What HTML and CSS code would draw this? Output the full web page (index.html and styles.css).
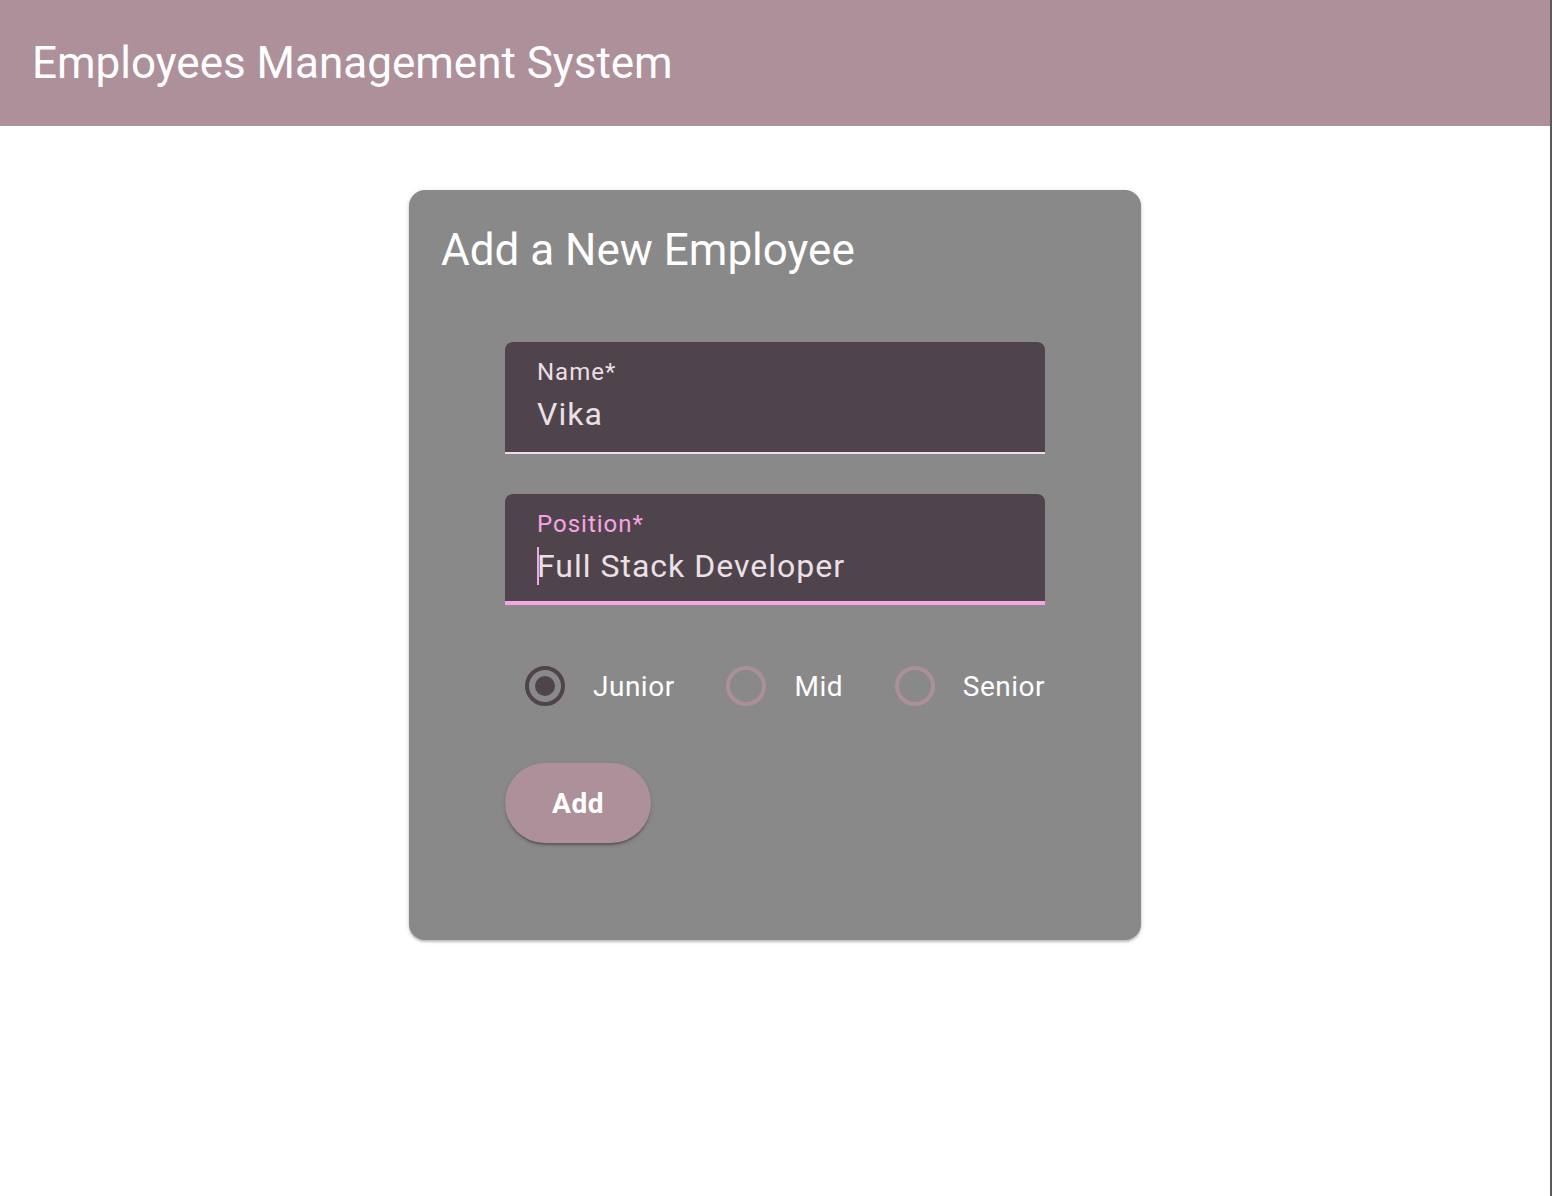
FILE: index.html
```html
<!DOCTYPE html>
<html lang="en">
<head>
<meta charset="utf-8">
<title>Employees Management System</title>
<link rel="stylesheet" href="styles.css">
</head>
<body>
<header class="toolbar">
  <span class="toolbar-title">Employees Management System</span>
</header>
<main class="content">
  <section class="card">
    <h2 class="card-title">Add a New Employee</h2>
    <form class="form">
      <div class="field">
        <label class="field-label">Name*</label>
        <div class="field-value">Vika</div>
      </div>
      <div class="field field-focused">
        <label class="field-label">Position*</label>
        <div class="field-value"><span class="caret"></span>Full Stack Developer</div>
      </div>
      <div class="radio-group">
        <div class="radio">
          <span class="radio-touch"><span class="radio-circle radio-checked"><span class="radio-dot"></span></span></span>
          <span class="radio-label">Junior</span>
        </div>
        <div class="radio">
          <span class="radio-touch"><span class="radio-circle"></span></span>
          <span class="radio-label">Mid</span>
        </div>
        <div class="radio">
          <span class="radio-touch"><span class="radio-circle"></span></span>
          <span class="radio-label">Senior</span>
        </div>
      </div>
      <div class="actions">
        <button type="button" class="btn-add">Add</button>
      </div>
    </form>
  </section>
</main>
</body>
</html>
```

FILE: styles.css
```css
* { box-sizing: border-box; }
html, body { height: 100%; }
body {
  margin: 0;
  font-family: Roboto, "Liberation Sans", sans-serif;
  background: #ffffff;
  border-right: 2px solid #5b5b5b;
}
.toolbar {
  height: 126px;
  background: #ae909a;
  display: flex;
  align-items: center;
  padding: 0 32px;
}
.toolbar-title {
  color: #ffffff;
  font-size: 44px;
  line-height: 56px;
  font-weight: 400;
  margin-top: -1px;
}
.content {
  display: flex;
  justify-content: center;
  padding-top: 64px;
}
.card {
  width: 732px;
  height: 750px;
  background: #898989;
  border-radius: 16px;
  padding: 32px;
  box-shadow: 0 2px 2px rgba(0,0,0,0.18), 0 1px 5px rgba(0,0,0,0.14);
}
.card-title {
  margin: 0;
  color: #ffffff;
  font-size: 44px;
  line-height: 56px;
  font-weight: 400;
}
.form {
  width: 540px;
  margin: 64px auto 0;
  display: flex;
  flex-direction: column;
}
.field {
  height: 112px;
  background: #4f444b;
  border-radius: 8px 8px 0 0;
  border-bottom: 2px solid #eadfe5;
  padding: 16px 32px 0;
  margin-bottom: 40px;
}
.field-focused {
  height: 111px;
  border-bottom: 4px solid #f6a4e6;
}
.field-label {
  display: block;
  font-size: 24px;
  line-height: 28px;
  letter-spacing: 1px;
  color: #eadfe5;
}
.field-focused .field-label { color: #f6a4e6; }
.field-value {
  margin-top: 8px;
  font-size: 32px;
  line-height: 40px;
  letter-spacing: 1px;
  color: #ebe0e6;
}
.caret {
  display: inline-block;
  width: 2px;
  height: 38px;
  background: #f6a4e6;
  vertical-align: -8px;
  margin-right: -2px;
}
.radio-group {
  display: flex;
  justify-content: space-between;
  align-items: center;
  margin-top: 1px;
}
.radio {
  display: flex;
  align-items: center;
}
.radio-touch {
  width: 80px;
  height: 80px;
  display: flex;
  align-items: center;
  justify-content: center;
}
.radio-circle {
  width: 40px;
  height: 40px;
  border-radius: 50%;
  border: 4px solid #ad8f99;
  display: flex;
  align-items: center;
  justify-content: center;
}
.radio-checked { border-color: #4f444b; }
.radio-dot {
  width: 20px;
  height: 20px;
  border-radius: 50%;
  background: #4f444b;
}
.radio-label {
  padding-left: 8px;
  color: #ffffff;
  font-size: 28px;
  letter-spacing: 0.5px;
}
.actions {
  margin-top: 37px;
}
.btn-add {
  width: 146px;
  height: 80px;
  border: none;
  border-radius: 40px;
  background: #ae909a;
  color: #ffffff;
  font-family: Roboto, "Liberation Sans", sans-serif;
  font-size: 28px;
  font-weight: 700;
  letter-spacing: 0.5px;
  box-shadow: 0 3px 2px -1px rgba(0,0,0,0.25), 0 2px 4px rgba(0,0,0,0.15);
  padding: 0;
}
```
